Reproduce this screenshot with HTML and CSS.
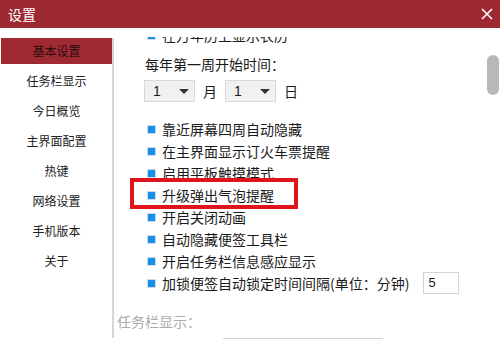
FILE: index.html
```html
<!DOCTYPE html>
<html lang="zh-CN">
<head>
<meta charset="utf-8">
<title>设置</title>
<link rel="stylesheet" href="styles.css">
</head>
<body>
<div class="window">
  <div class="titlebar">
    <span class="title">设置</span>
    <svg class="close" width="12" height="12" viewBox="0 0 12 12"><path d="M1 1 L11 11 M11 1 L1 11" stroke="#fff" stroke-width="1.6" fill="none"/></svg>
  </div>
  <div class="main">
    <div class="sidebar">
      <div class="nav-item active">基本设置</div>
      <div class="nav-item">任务栏显示</div>
      <div class="nav-item">今日概览</div>
      <div class="nav-item">主界面配置</div>
      <div class="nav-item">热键</div>
      <div class="nav-item">网络设置</div>
      <div class="nav-item">手机版本</div>
      <div class="nav-item">关于</div>
    </div>
    <div class="viewport">
      <div class="inner">
        <div class="row"><span class="cb"></span>在万年历上显示农历</div>
        <div class="row label-row">每年第一周开始时间：</div>
        <div class="select-row">
          <div class="select"><span>1</span><span class="arrow"></span></div>
          <span class="unit">月</span>
          <div class="select"><span>1</span><span class="arrow"></span></div>
          <span class="unit">日</span>
        </div>
        <div class="checks">
          <div class="row"><span class="cb"></span>靠近屏幕四周自动隐藏</div>
          <div class="row"><span class="cb"></span>在主界面显示订火车票提醒</div>
          <div class="row"><span class="cb"></span>启用平板触摸模式</div>
          <div class="row"><span class="cb"></span>升级弹出气泡提醒</div>
          <div class="row"><span class="cb"></span>开启关闭动画</div>
          <div class="row"><span class="cb"></span>自动隐藏便签工具栏</div>
          <div class="row"><span class="cb"></span>开启任务栏信息感应显示</div>
          <div class="row"><span class="cb"></span>加锁便签自动锁定时间间隔(单位：分钟)<span class="num">5</span></div>
        </div>
        <div class="section">任务栏显示：</div>
        <div class="next-box"></div>
      </div>
      <div class="thumb"></div>
      <div class="highlight"></div>
    </div>
  </div>
</div>
</body>
</html>
```
FILE: styles.css
```css
html, body {
  margin: 0;
  padding: 0;
  background: #fff;
}
.window {
  width: 500px;
  height: 343px;
  overflow: hidden;
  font-family: "Noto Sans CJK SC", "Liberation Sans", sans-serif;
  color: #1a1a1a;
  display: flex;
  flex-direction: column;
}
.titlebar {
  height: 28px;
  flex: none;
  background: #9d2a33;
  display: flex;
  align-items: center;
  justify-content: space-between;
  padding: 0 7px 0 8px;
}
.title {
  color: #fff;
  font-size: 14px;
  line-height: 28px;
}
.close {
  display: block;
}
.main {
  flex: 1;
  display: flex;
  min-height: 0;
}
.sidebar {
  width: 111px;
  padding-left: 1px;
  margin-top: 10px;
  height: 300px;
  border-right: 2px solid #d6d6d6;
  flex: none;
}
.nav-item {
  height: 26px;
  line-height: 26px;
  margin-bottom: 4px;
  text-align: center;
  font-size: 12px;
  color: #222;
}
.nav-item.active {
  background: #9f2a33;
  color: #2b0c0e;
}
.viewport {
  position: relative;
  flex: 1;
  margin-top: 9px;
  overflow: hidden;
  padding-left: 3px;
}
.inner {
  margin-top: -13px;
}
.row {
  height: 22px;
  display: flex;
  align-items: center;
  font-size: 14px;
  padding-left: 30px;
  white-space: nowrap;
}
.label-row {
  padding-left: 28px;
  margin-top: 7px;
}
.cb {
  width: 7px;
  height: 7px;
  background: #1590e8;
  border: 1px solid #cfdbe6;
  margin-right: 6px;
  flex: none;
}
.select-row {
  margin-top: 5px;
  padding-left: 27px;
  height: 22px;
  display: flex;
  align-items: center;
  font-size: 14px;
}
.select {
  height: 20px;
  border: 1px solid #d8d8d8;
  background: #f1f1f1;
  display: flex;
  align-items: center;
  justify-content: space-between;
  padding: 0 5px 0 0;
  width: 44px;
  font-family: "Liberation Sans", sans-serif;
  font-size: 14px;
}
.select span:first-child {
  padding-left: 8px;
}
.arrow {
  width: 0;
  height: 0;
  border-left: 5px solid transparent;
  border-right: 5px solid transparent;
  border-top: 5px solid #333;
}
.unit {
  margin: 0 8px;
}
.checks {
  margin-top: 16px;
}
.num {
  display: inline-block;
  width: 30px;
  height: 20px;
  line-height: 20px;
  border: 1px solid #d4d4d4;
  margin-left: 14px;
  padding-left: 4px;
  font-family: "Liberation Sans", sans-serif;
  font-size: 13px;
}
.section {
  margin-top: 16px;
  height: 22px;
  line-height: 22px;
  font-size: 14px;
  color: #ababab;
}
.next-box {
  margin-top: 6px;
  margin-left: 106px;
  width: 160px;
  height: 10px;
  border-top: 1px solid #d0d0d0;
}
.thumb {
  position: absolute;
  right: 1px;
  top: 18px;
  width: 12px;
  height: 40px;
  border-radius: 6px;
  background: #b8b8b8;
}
.highlight {
  position: absolute;
  left: 16px;
  top: 141px;
  width: 168px;
  height: 31px;
  box-sizing: border-box;
  border: 4px solid #e0141c;
}
```
